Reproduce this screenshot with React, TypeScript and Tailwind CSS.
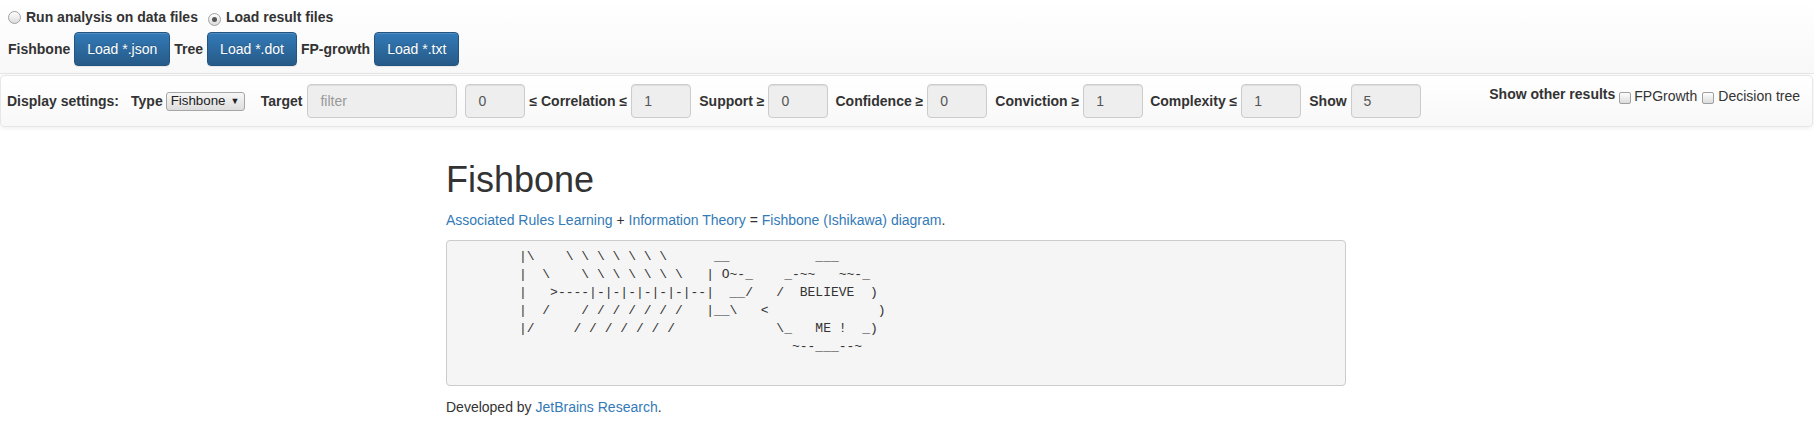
import React from "react";

const sp = (n: number) => " ".repeat(n);
const bs = "\\ \\ \\ \\ \\ \\ \\";
const fs = "/ / / / / / /";
const art = [
  sp(8) + "|\\" + sp(4) + bs + sp(6) + "__" + sp(11) + "___",
  sp(8) + "|" + sp(2) + "\\" + sp(4) + bs + sp(3) + "| O~-_" + sp(4) + "_-~~" + sp(3) + "~~-_",
  sp(8) + "|" + sp(3) + ">----|-|-|-|-|-|-|--|" + sp(2) + "__/" + sp(3) + "/" + sp(2) + "BELIEVE" + sp(2) + ")",
  sp(8) + "|" + sp(2) + "/" + sp(4) + fs + sp(3) + "|__\\" + sp(3) + "<" + sp(14) + ")",
  sp(8) + "|/" + sp(5) + fs + sp(13) + "\\_" + sp(3) + "ME !  _)",
  sp(43) + "~--___--~",
  " ",
].join("\n");

function Radio({ checked }: { checked?: boolean }) {
  return (
    <span className="inline-flex items-center justify-center w-[13px] h-[13px] rounded-full border border-[#a0a0a0] bg-[linear-gradient(#fdfdfd,#dcdcdc)] shadow-[inset_0_1px_0_rgba(255,255,255,0.6)]">
      {checked && <span className="w-[5px] h-[5px] rounded-full bg-[#555]" />}
    </span>
  );
}

function Check() {
  return (
    <span className="inline-block w-[12px] h-[12px] rounded-[2px] border border-[#a0a0a0] bg-[linear-gradient(#fdfdfd,#dcdcdc)]" />
  );
}

function Btn({ children }: { children: React.ReactNode }) {
  return (
    <span className="inline-flex items-center h-[34px] px-[12px] rounded-[4px] border border-[#245580] bg-[linear-gradient(#337ab7,#265a88)] text-white text-[14px] [text-shadow:0_-1px_0_rgba(0,0,0,0.2)] shadow-[inset_0_1px_0_rgba(255,255,255,0.15),0_1px_1px_rgba(0,0,0,0.075)]">
      {children}
    </span>
  );
}

function Input({ value, w = 60, placeholder }: { value?: string; w?: number; placeholder?: string }) {
  return (
    <span
      className="inline-flex items-center h-[34px] px-[12px] rounded-[4px] border border-[#ccc] bg-[#eee] text-[14px] shadow-[inset_0_1px_1px_rgba(0,0,0,0.075)]"
      style={{ width: w }}
    >
      {placeholder ? <span className="text-[#999]">{placeholder}</span> : <span className="text-[#555]">{value}</span>}
    </span>
  );
}

function L({ children, className = "" }: { children: React.ReactNode; className?: string }) {
  return <span className={"font-bold text-[14px] text-[#333] whitespace-nowrap " + className}>{children}</span>;
}

export default function App() {
  return (
    <div className="w-[1814px] h-[422px] bg-white text-[#333] text-[14px] leading-[20px] font-['Liberation_Sans',Arial,sans-serif] overflow-hidden">
      {/* top controls */}
      <div className="h-[74px] border-b border-[#e7e7e7] bg-[linear-gradient(#ffffff,#f8f8f8)] pl-[8px] pt-[7px]">
        <div className="flex items-center h-[20px]">
          <Radio />
          <L className="ml-[5px]">Run analysis on data files</L>
          <span className="ml-[10px]">
            <Radio checked />
          </span>
          <L className="ml-[5px]">Load result files</L>
        </div>
        <div className="flex items-center mt-[5px]">
          <L>Fishbone</L>
          <span className="ml-[4px]"><Btn>Load *.json</Btn></span>
          <L className="ml-[4px]">Tree</L>
          <span className="ml-[4px]"><Btn>Load *.dot</Btn></span>
          <L className="ml-[4px]">FP-growth</L>
          <span className="ml-[4px]"><Btn>Load *.txt</Btn></span>
        </div>
      </div>

      {/* display settings navbar */}
      <div className="mt-[1px] h-[52px] mr-[1px] rounded-[4px] border border-[#e7e7e7] bg-[linear-gradient(#ffffff,#f8f8f8)] shadow-[0_1px_5px_rgba(0,0,0,0.075)] flex items-start">
        <div className="flex items-center h-full pl-[6px]">
          <L>Display settings:</L>
          <L className="ml-[12px]">Type</L>
          <span className="ml-[3px] inline-flex items-center h-[19px] w-[79px] pl-[4px] rounded-[3px] border border-[#a6a6a6] bg-[linear-gradient(#f7f7f7,#dddddd)] text-[13.33px] text-[#222]">
            Fishbone<span className="ml-[5px] text-[9px]">▼</span>
          </span>
          <L className="ml-[16px]">Target</L>
          <span className="ml-[5px]"><Input w={150} placeholder="filter" /></span>
          <span className="ml-[8px]"><Input value="0" /></span>
          <L className="ml-[4px]">≤ Correlation ≤</L>
          <span className="ml-[4px]"><Input value="1" /></span>
          <L className="ml-[8px]">Support ≥</L>
          <span className="ml-[4px]"><Input value="0" /></span>
          <L className="ml-[7px]">Confidence ≥</L>
          <span className="ml-[4px]"><Input value="0" /></span>
          <L className="ml-[8px]">Conviction ≥</L>
          <span className="ml-[4px]"><Input value="1" /></span>
          <L className="ml-[7px]">Complexity ≤</L>
          <span className="ml-[4px]"><Input value="1" /></span>
          <L className="ml-[8px]">Show</L>
          <span className="ml-[4px]"><Input value="5" w={70} /></span>
        </div>
        <div className="ml-auto mr-[12px] mt-[8px] flex items-start">
          <L>Show other results</L>
          <span className="ml-[4px] mt-[5px]"><Check /></span>
          <span className="ml-[3px] mt-[2px] text-[#333]">FPGrowth</span>
          <span className="ml-[5px] mt-[5px]"><Check /></span>
          <span className="ml-[4px] mt-[2px] text-[#333]">Decision tree</span>
        </div>
      </div>

      {/* main content */}
      <div className="pl-[446px] w-[1346px]">
        <h1 className="mt-[33px] mb-[10px] text-[36px] leading-[1.1] font-medium text-[#333]">Fishbone</h1>
        <p className="mb-[10px]">
          <a className="text-[#337ab7]">Associated Rules Learning</a> + <a className="text-[#337ab7]">Information Theory</a> ={" "}
          <a className="text-[#337ab7]">Fishbone (Ishikawa) diagram</a>.
        </p>
        <pre className="w-[900px] rounded-[4px] border border-[#ccc] bg-[#f5f5f5] px-[9.5px] pt-[7.5px] pb-[10.5px] font-['Liberation_Mono',monospace] text-[13px] leading-[18px] text-[#333] overflow-hidden">
          {art}
        </pre>
        <p className="mt-[11px]">
          Developed by <a className="text-[#337ab7]">JetBrains Research</a>.
        </p>
      </div>
    </div>
  );
}
